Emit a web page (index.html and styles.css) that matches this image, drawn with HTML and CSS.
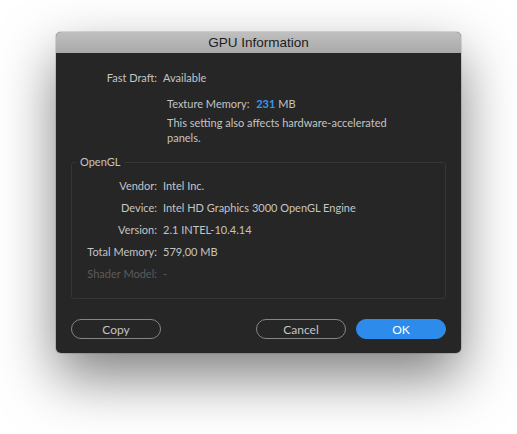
FILE: index.html
```html
<!DOCTYPE html>
<html>
<head>
<meta charset="utf-8">
<title>GPU Information</title>
<link rel="stylesheet" href="styles.css">
</head>
<body>
<div class="window">
  <div class="titlebar">GPU Information</div>
  <div class="content">
    <div class="row top-row"><span class="label">Fast Draft:</span><span class="value">Available</span></div>
    <div class="texture">
      <div class="tex-line">Texture Memory: <span class="accent">231</span> MB</div>
      <div class="note">This setting also affects hardware-accelerated panels.</div>
    </div>
    <fieldset class="group">
      <legend>OpenGL</legend>
      <div class="row"><span class="label">Vendor:</span><span class="value">Intel Inc.</span></div>
      <div class="row"><span class="label">Device:</span><span class="value">Intel HD Graphics 3000 OpenGL Engine</span></div>
      <div class="row"><span class="label">Version:</span><span class="value">2.1 INTEL-10.4.14</span></div>
      <div class="row"><span class="label">Total Memory:</span><span class="value">579,00 MB</span></div>
      <div class="row dim"><span class="label">Shader Model:</span><span class="value">-</span></div>
    </fieldset>
    <div class="buttons">
      <button class="btn">Copy</button>
      <div class="spacer"></div>
      <button class="btn">Cancel</button>
      <button class="btn primary">OK</button>
    </div>
  </div>
</div>
</body>
</html>
```
FILE: styles.css
```css
html, body {
  margin: 0;
  background: #ffffff;
}
body {
  box-sizing: border-box;
  min-height: 434px;
  padding: 32px 0 0 56px;
  font-family: Lato, "Liberation Sans", sans-serif;
}
.window {
  width: 405px;
  border-radius: 5px;
  background: #262626;
  box-shadow: 0 24px 56px rgba(0,0,0,0.5), 0 0 0 1px rgba(0,0,0,0.12);
  overflow: hidden;
}
.titlebar {
  height: 21px;
  line-height: 22px;
  text-align: center;
  font-family: "Liberation Sans", Arial, sans-serif;
  font-size: 13.5px;
  color: #1c1c1c;
  background: linear-gradient(#c0c0c0, #a9a9a9);
}
.content {
  padding: 17px 15px 14px 15px;
  font-size: 11px;
  color: #c4c4c4;
}
.row {
  display: flex;
  gap: 6px;
  height: 22px;
  line-height: 22px;
}
.top-row {
  height: 16px;
  line-height: 16px;
}
.label {
  width: 86px;
  text-align: right;
  flex: none;
}
.group .label {
  width: 85px;
}
.texture {
  margin: 10px 0 0 96px;
}
.tex-line {
  line-height: 16px;
}
.accent {
  color: #3a97ee;
  font-weight: 700;
  margin-left: 4px;
}
.note {
  margin-top: 3px;
  width: 226px;
  line-height: 15px;
}
.group {
  margin: 9px 0 0 0;
  padding: 5px 0 13px 0;
  border: 1px solid #363636;
  border-radius: 3px;
}
.group legend {
  margin-left: 4px;
  padding: 0 4px;
  line-height: 16px;
  color: #c4c4c4;
}
.dim {
  color: #5c5c5c;
}
.buttons {
  display: flex;
  gap: 10px;
  margin-top: 20px;
}
.spacer {
  flex: 1;
}
.btn {
  width: 90px;
  height: 20px;
  border: 1.5px solid #858585;
  border-radius: 10px;
  background: transparent;
  color: #c4c4c4;
  font-family: Lato, "Liberation Sans", sans-serif;
  font-size: 12px;
  padding: 0;
}
.btn.primary {
  background: #2d8ceb;
  border-color: #2d8ceb;
  color: #ffffff;
}
```
